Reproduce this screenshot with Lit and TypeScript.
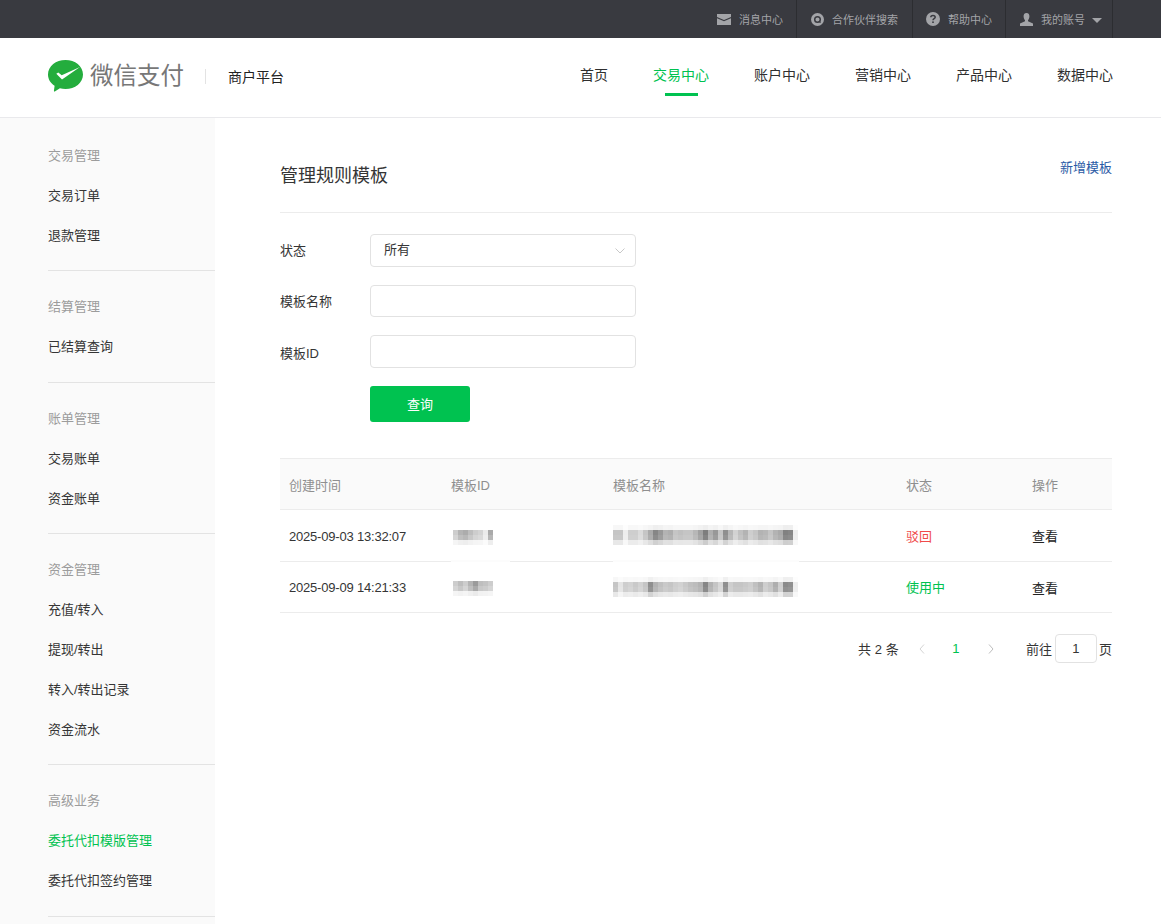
import { LitElement, html, css, svg, unsafeCSS } from "lit";
import { customElement } from "lit/decorators.js";

const FONT = unsafeCSS(`"Liberation Sans", "Noto Sans CJK SC", sans-serif`);
const groups: { t: string; items: string[] }[] = [
  { t: "交易管理", items: ["交易订单", "退款管理"] },
  { t: "结算管理", items: ["已结算查询"] },
  { t: "账单管理", items: ["交易账单", "资金账单"] },
  { t: "资金管理", items: ["充值/转入", "提现/转出", "转入/转出记录", "资金流水"] },
  { t: "高级业务", items: ["委托代扣模版管理", "委托代扣签约管理"] },
];
const nav = ["首页", "交易中心", "账户中心", "营销中心", "产品中心", "数据中心"];

// Grey levels of the pixelated, redacted table values (one strong row per entry; light fringes are derived)
const mosaics: Record<string, number[]> = {
  id1: [205, 180, 172, 190, 205, 212, 235, 170],
  id2: [205, 190, 205, 180, 155, 190, 195, 205],
  name1: [190,190,235,200,200,215,190,160,120,140,170,165,190,185,190,190,175,150,110,165,140,190,130,175,205,185,170,200,190,170,175,190,170,160,115,120,235],
  name2: [190,225,200,205,195,205,190,130,170,185,195,190,200,205,195,185,180,170,120,170,190,210,130,200,190,190,195,200,185,170,200,190,165,200,125,130,235],
};
const fade = (v: number, k: number) => Math.round(255 - (255 - v) * k);

function mosaic(key: string, cls: string) {
  const r = mosaics[key];
  const tall = key.startsWith("name");
  const rows = tall ? [0.12, 0.9, 0.85, 0.35] : [1, 0.85, 0.2, 0];
  const w = r.length * 5;
  return html`<svg class="mosaic ${cls}" width=${w} height="20" viewBox="0 0 ${w} 20" shape-rendering="crispEdges">
    ${rows.map((k, y) =>
      r.map((v, x) => {
        const g = fade(v, k);
        return svg`<rect x=${x * 5} y=${y * 5} width="5" height="5" fill="rgb(${g},${g},${g})"></rect>`;
      })
    )}
  </svg>`;
}

@customElement("app-root")
export class AppRoot extends LitElement {
  static styles = css`
    :host { display: block; font-family: ${FONT}; color: #353535; font-size: 13px; }
    * { box-sizing: border-box; }
    .top { height: 38px; background: #393a40; display: flex; justify-content: flex-end; padding-right: 48px; color: #a3a4a8; font-size: 11px; }
    .top-item { display: flex; align-items: center; gap: 8px; padding: 0 13px 0 14px; border-right: 1px solid #2c2d31; height: 38px; }
    .top-item svg { display: block; flex: none; }
    .top-item .caret { width: 0; height: 0; border: 5px solid transparent; border-top-color: #a3a4a8; border-bottom: 0; margin: 2px 0 0 -1px; }
    .top-item.last { padding-right: 10px; }
    .top-item.second { padding-right: 14px; }
    .top-item.third { padding-left: 13px; }
    .head { height: 80px; display: flex; align-items: center; justify-content: space-between; padding: 0 48px 3px 48px; border-bottom: 1px solid #e9e9ec; }
    .brand { display: flex; align-items: center; }
    .logo-text { font-size: 23.5px; color: #777; margin-left: 7px; line-height: 30px; }
    .brand .sep { width: 1px; height: 15px; background: #e3e3e3; margin: 0 22px 0 21px; }
    .brand .sub { font-size: 14px; color: #222; }
    .nav { display: flex; gap: 45px; padding-bottom: 2px; }
    .nav a { position: relative; font-size: 14px; color: #2f2f2f; line-height: 40px; }
    .nav a.on { color: #00c250; }
    .nav a.on::after { content: ""; position: absolute; left: 12px; right: 11px; bottom: -1px; height: 3px; background: #00c250; }
    .body { display: flex; align-items: stretch; height: 806px; overflow: hidden; }
    .side { width: 215px; background: #fafafa; padding: 18px 0 0 48px; flex: none; }
    .group { border-bottom: 1px solid #e3e3e3; padding-bottom: 14px; margin-bottom: 16px; }
    .group:nth-child(2), .group:nth-child(5) { padding-bottom: 15px; }
    .group .t { line-height: 40px; height: 40px; color: #9c9c9c; font-size: 13px; }
    .group .i { line-height: 40px; height: 40px; color: #353535; font-size: 13px; }
    .group .i.on { color: #00c250; }
    .main { flex: 1; padding: 0 49px 0 65px; }
    .title-row { display: flex; justify-content: space-between; height: 95px; border-bottom: 1px solid #ececec; }
    .title-row h1 { margin: 43px 0 0; font-size: 18px; font-weight: 400; line-height: 30px; color: #353535; }
    .title-row a { margin-top: 38px; font-size: 13px; line-height: 24px; color: #2b5ba5; }
    .form { padding-top: 21px; }
    .row { display: flex; align-items: center; margin-bottom: 18px; }
    .row label { width: 90px; font-size: 13px; padding-bottom: 2px; }
    .row label.low { padding: 2px 0 0; }
    .field { width: 266px; height: 33px; border: 1px solid #e2e2e2; border-radius: 4px; background: #fff; display: flex; align-items: center; justify-content: space-between; padding: 0 10px 0 13px; font-size: 13px; }
    .field span { padding-bottom: 4px; }
    .field svg { margin-top: 1px; }
    .field.s32 { height: 32px; }
    .btn { margin-left: 90px; width: 100px; height: 36px; border-radius: 3px; background: #00c250; color: #fff; font-size: 13px; display: flex; align-items: center; justify-content: center; padding-bottom: 2px; }
    .table { margin-top: 36px; border-top: 1px solid #ececec; }
    .tr { position: relative; display: grid; grid-template-columns: 162px 162px 293px 126px 1fr; padding-left: 9px; align-items: center; border-bottom: 1px solid #ececec; height: 51.5px; }
    .tr.h { background: #fafafa; color: #8f8f8f; height: 51px; }
    .date { letter-spacing: -0.2px; padding-top: 2px; }
    .patch { position: absolute; bottom: -1px; height: 2px; background: #fcfcfc; }
    .patch.a { left: 171px; width: 59px; }
    .patch.b { left: 333px; width: 186px; }
    .red { color: #f04a4a; }
    .green { color: #00c250; }
    .black { color: #222; }
    .black.low { padding-top: 2px; }
    .mosaic { display: block; }
    .mosaic.idm { margin-left: 2px; margin-top: 10px; }
    .mosaic.idm2 { margin-left: 2px; margin-top: 8px; }
    .pager { display: flex; align-items: center; justify-content: flex-end; margin-top: 21px; height: 29px; font-size: 13px; }
    .pager .total { letter-spacing: 0.1px; margin-right: 20px; }
    .pager .num { color: #00c250; width: 16px; text-align: center; margin: 0 24px 0 23px; }
    .pager .goto-label { margin-left: 32px; }
    .pager svg { display: block; }
    .goto { width: 42px; height: 29px; border: 1px solid #e2e2e2; border-radius: 4px; display: flex; align-items: center; justify-content: center; margin: 0 2px 0 3px; }
  `;

  render() {
    return html`
      <div class="top">
        <div class="top-item">
          <svg width="14" height="11" viewBox="0 0 14 11"><path fill="#a3a4a8" d="M0 0h14v3L7 6 0 3zM0 4.200 7 7.200l7-3V11H0z"/></svg>
          <span>消息中心</span>
        </div>
        <div class="top-item second">
          <svg width="13" height="13" viewBox="0 0 14 14"><circle cx="7" cy="7" r="7" fill="#a3a4a8"/><circle cx="7" cy="7" r="3" fill="none" stroke="#393a40" stroke-width="1.600"/><path d="M8.600 8.600 10.300 10.300" stroke="#393a40" stroke-width="1.200"/></svg>
          <span>合作伙伴搜索</span>
        </div>
        <div class="top-item third">
          <svg width="14" height="14" viewBox="0 0 14 14"><circle cx="7" cy="7" r="7" fill="#a3a4a8"/><path d="M4.800 5.300C4.800 2.900 9.200 2.900 9.200 5.300 9.200 6.800 7 6.600 7 8.300" fill="none" stroke="#393a40" stroke-width="1.500"/><rect x="6.200" y="9.400" width="1.600" height="1.600" fill="#393a40"/></svg>
          <span>帮助中心</span>
        </div>
        <div class="top-item last">
          <svg width="13" height="13" viewBox="0 0 13 13"><path fill="#a3a4a8" d="M6.500 0C8.600 0 9.600 1.600 9.400 3.800 9.200 5.600 8.400 6.800 8 7.300V8.300L13 10.600V13H0V10.600L5 8.300V7.300C4.600 6.800 3.800 5.600 3.600 3.800 3.400 1.600 4.400 0 6.500 0Z"/></svg>
          <span>我的账号</span><i class="caret"></i>
        </div>
      </div>
      <div class="head">
        <div class="brand">
          <svg width="35" height="32" viewBox="0 0 35 32">
            <path fill="#24ad3d" d="M17.500 0C27 0 35 6 35 14.500S27 29 17.500 29c-2 0-3.900-.3-5.600-.8L6.800 31.500c-.5.300-1 0-.9-.6L6.600 25.800C2.500 23.200 0 19.100 0 14.500 0 6 8 0 17.500 0Z"/>
            <path fill="#fff" d="M8.300 13.800 10.300 12.600 13.700 15.200 32 7 14 19.500Z"/>
          </svg>
          <span class="logo-text">微信支付</span>
          <i class="sep"></i>
          <span class="sub">商户平台</span>
        </div>
        <div class="nav">
          ${nav.map((n, i) => html`<a class=${i === 1 ? "on" : ""}>${n}</a>`)}
        </div>
      </div>
      <div class="body">
        <div class="side">
          ${groups.map(
            (g) => html`<div class="group">
              <div class="t">${g.t}</div>
              ${g.items.map((it) => html`<div class="i ${it === "委托代扣模版管理" ? "on" : ""}">${it}</div>`)}
            </div>`
          )}
        </div>
        <div class="main">
          <div class="title-row"><h1>管理规则模板</h1><a>新增模板</a></div>
          <div class="form">
            <div class="row">
              <label>状态</label>
              <div class="field"><span>所有</span>
                <svg width="10" height="6" viewBox="0 0 10 6"><path d="M.5.500 5 5 9.500.5" fill="none" stroke="#c8c8c8"/></svg>
              </div>
            </div>
            <div class="row"><label>模板名称</label><div class="field s32"></div></div>
            <div class="row"><label class="low">模板ID</label><div class="field"></div></div>
            <div class="btn">查询</div>
          </div>
          <div class="table">
            <div class="tr h"><span>创建时间</span><span>模板ID</span><span>模板名称</span><span>状态</span><span>操作</span></div>
            <div class="tr">
              <span class="date">2025-09-03 13:32:07</span>${mosaic("id1", "idm")}${mosaic("name1", "")}<span class="red">驳回</span><span class="black">查看</span>
              <i class="patch a"></i><i class="patch b"></i>
            </div>
            <div class="tr">
              <span class="date">2025-09-09 14:21:33</span>${mosaic("id2", "idm2")}${mosaic("name2", "")}<span class="green">使用中</span><span class="black low">查看</span>
            </div>
          </div>
          <div class="pager">
            <span class="total">共 2 条</span>
            <svg width="6" height="10" viewBox="0 0 6 10"><path d="M5 .5 1 5l4 4.500" fill="none" stroke="#d4d4d4"/></svg>
            <span class="num">1</span>
            <svg width="6" height="10" viewBox="0 0 6 10"><path d="M1 .5 5 5 1 9.500" fill="none" stroke="#bdbdbd"/></svg>
            <span class="goto-label">前往</span>
            <div class="goto">1</div>
            <span>页</span>
          </div>
        </div>
      </div>
    `;
  }
}
